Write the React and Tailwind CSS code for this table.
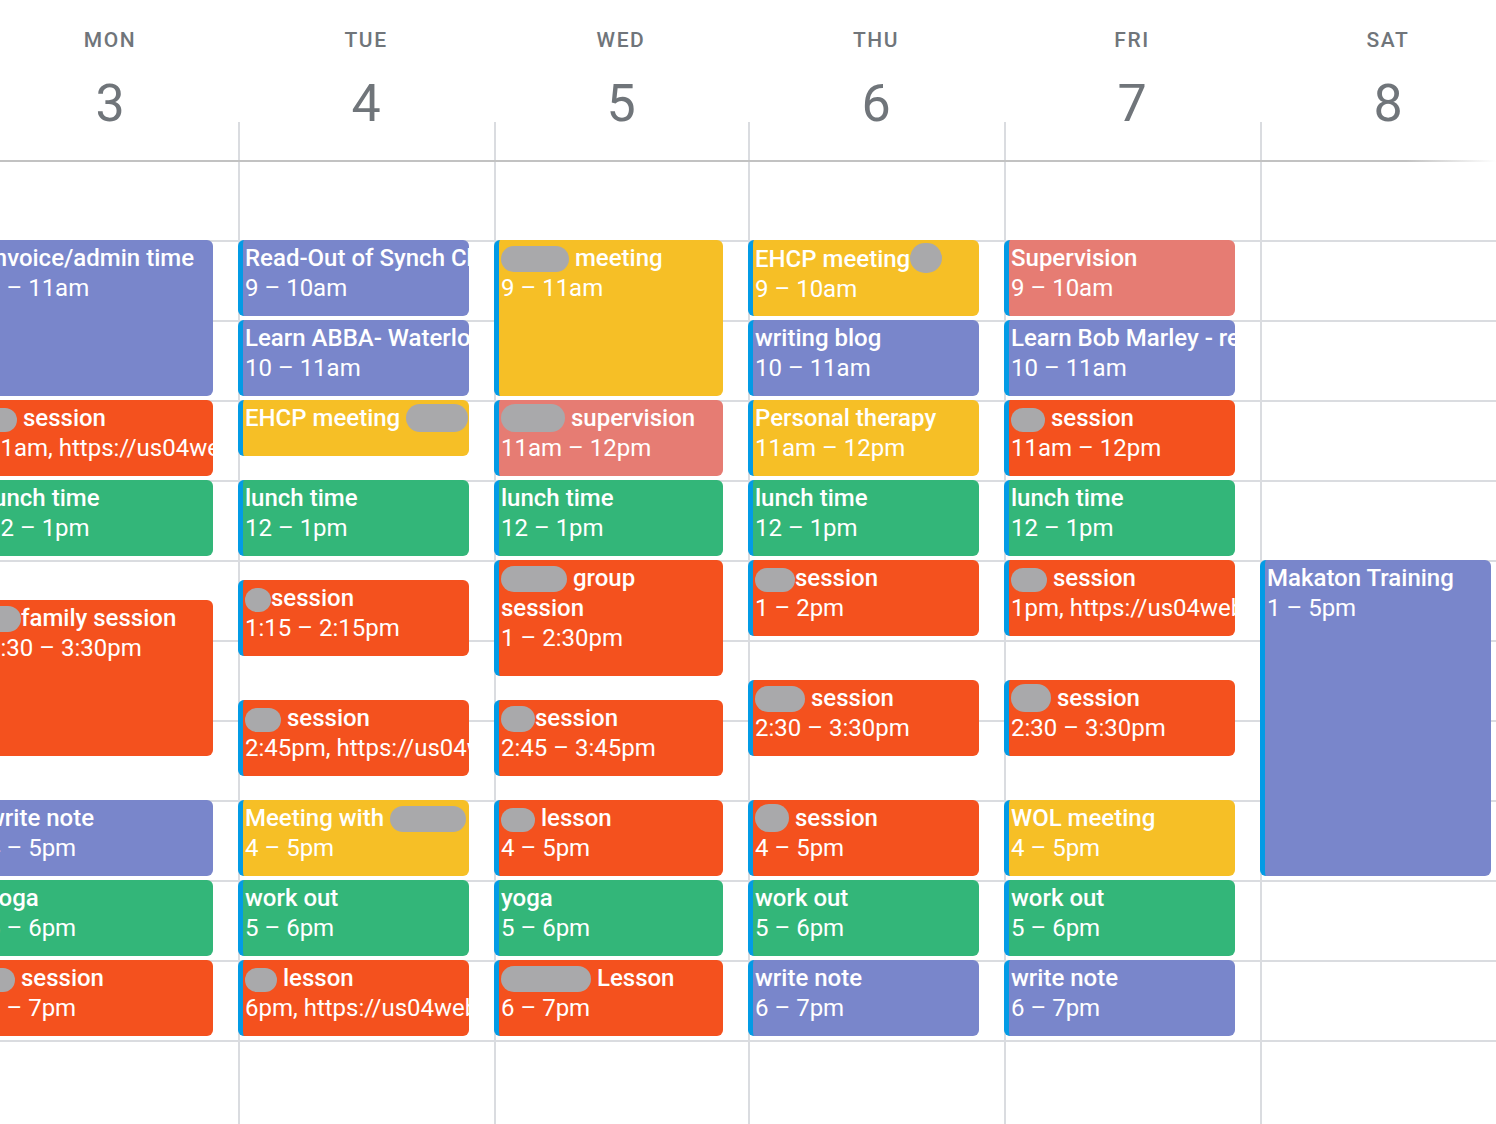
import React from 'react';

const LAV = 'bg-[#7986cb]';
const YEL = 'bg-[#f6bf26]';
const ORG = 'bg-[#f4511e]';
const FLA = 'bg-[#e67c73]';
const GRN = 'bg-[#33b679]';

// redacted name smudge
const Blob = ({ className }) => (
  <span className={`inline-block align-[-6px] rounded-full bg-[#a9a9ab] ${className}`} />
);

const days = [
  {
    name: 'MON',
    num: 3,
    w: 'w-[256px]',
    events: [
      { s: 9, e: 11, c: LAV, title: 'Invoice/admin time', time: '9 – 11am' },
      { s: 11, e: 12, c: ORG, title: <><Blob className="w-[30px] h-[24px]" /> session</>, time: '11am, https://us04web.zoom.us/j/' },
      { s: 12, e: 13, c: GRN, title: 'lunch time', time: '12 – 1pm' },
      { s: 13.5, e: 15.5, c: ORG, title: <><Blob className="w-[34px] h-[26px]" />family session</>, time: '1:30 – 3:30pm' },
      { s: 16, e: 17, c: LAV, title: 'write note', time: '4 – 5pm' },
      { s: 17, e: 18, c: GRN, title: 'yoga', time: '5 – 6pm' },
      { s: 18, e: 19, c: ORG, title: <><Blob className="w-[28px] h-[24px]" /> session</>, time: '6 – 7pm' },
    ],
  },
  {
    name: 'TUE',
    num: 4,
    w: 'w-[256px]',
    events: [
      { s: 9, e: 10, c: LAV, title: 'Read-Out of Synch Choir', time: '9 – 10am' },
      { s: 10, e: 11, c: LAV, title: 'Learn ABBA- Waterloo', time: '10 – 11am' },
      { s: 11, e: 11.75, c: YEL, title: <>EHCP meeting <Blob className="w-[62px] h-[28px]" /></>, time: '' },
      { s: 12, e: 13, c: GRN, title: 'lunch time', time: '12 – 1pm' },
      { s: 13.25, e: 14.25, c: ORG, title: <><Blob className="w-[26px] h-[24px]" />session</>, time: '1:15 – 2:15pm' },
      { s: 14.75, e: 15.75, c: ORG, title: <><Blob className="w-[36px] h-[24px]" /> session</>, time: '2:45pm, https://us04web.zoom.us' },
      { s: 16, e: 17, c: YEL, title: <>Meeting with <Blob className="w-[76px] h-[26px]" /></>, time: '4 – 5pm' },
      { s: 17, e: 18, c: GRN, title: 'work out', time: '5 – 6pm' },
      { s: 18, e: 19, c: ORG, title: <><Blob className="w-[32px] h-[24px]" /> lesson</>, time: '6pm, https://us04web.zoom.us' },
    ],
  },
  {
    name: 'WED',
    num: 5,
    w: 'w-[254px]',
    events: [
      { s: 9, e: 11, c: YEL, title: <><Blob className="w-[68px] h-[26px]" /> meeting</>, time: '9 – 11am' },
      { s: 11, e: 12, c: FLA, title: <><Blob className="w-[64px] h-[28px]" /> supervision</>, time: '11am – 12pm' },
      { s: 12, e: 13, c: GRN, title: 'lunch time', time: '12 – 1pm' },
      { s: 13, e: 14.5, c: ORG, title: <><Blob className="w-[66px] h-[26px]" /> group<br />session</>, time: '1 – 2:30pm' },
      { s: 14.75, e: 15.75, c: ORG, title: <><Blob className="w-[34px] h-[26px]" />session</>, time: '2:45 – 3:45pm' },
      { s: 16, e: 17, c: ORG, title: <><Blob className="w-[34px] h-[24px]" /> lesson</>, time: '4 – 5pm' },
      { s: 17, e: 18, c: GRN, title: 'yoga', time: '5 – 6pm' },
      { s: 18, e: 19, c: ORG, title: <><Blob className="w-[90px] h-[26px]" /> Lesson</>, time: '6 – 7pm' },
    ],
  },
  {
    name: 'THU',
    num: 6,
    w: 'w-[256px]',
    events: [
      { s: 9, e: 10, c: YEL, title: <>EHCP meeting<Blob className="w-[32px] h-[30px]" /></>, time: '9 – 10am' },
      { s: 10, e: 11, c: LAV, title: 'writing blog', time: '10 – 11am' },
      { s: 11, e: 12, c: YEL, title: 'Personal therapy', time: '11am – 12pm' },
      { s: 12, e: 13, c: GRN, title: 'lunch time', time: '12 – 1pm' },
      { s: 13, e: 14, c: ORG, title: <><Blob className="w-[40px] h-[24px]" />session</>, time: '1 – 2pm' },
      { s: 14.5, e: 15.5, c: ORG, title: <><Blob className="w-[50px] h-[26px]" /> session</>, time: '2:30 – 3:30pm' },
      { s: 16, e: 17, c: ORG, title: <><Blob className="w-[34px] h-[28px]" /> session</>, time: '4 – 5pm' },
      { s: 17, e: 18, c: GRN, title: 'work out', time: '5 – 6pm' },
      { s: 18, e: 19, c: LAV, title: 'write note', time: '6 – 7pm' },
    ],
  },
  {
    name: 'FRI',
    num: 7,
    w: 'w-[256px]',
    events: [
      { s: 9, e: 10, c: FLA, title: 'Supervision', time: '9 – 10am' },
      { s: 10, e: 11, c: LAV, title: 'Learn Bob Marley - redemption song', time: '10 – 11am' },
      { s: 11, e: 12, c: ORG, title: <><Blob className="w-[34px] h-[24px]" /> session</>, time: '11am – 12pm' },
      { s: 12, e: 13, c: GRN, title: 'lunch time', time: '12 – 1pm' },
      { s: 13, e: 14, c: ORG, title: <><Blob className="w-[36px] h-[24px]" /> session</>, time: '1pm, https://us04web.zoom.us' },
      { s: 14.5, e: 15.5, c: ORG, title: <><Blob className="w-[40px] h-[28px]" /> session</>, time: '2:30 – 3:30pm' },
      { s: 16, e: 17, c: YEL, title: 'WOL meeting', time: '4 – 5pm' },
      { s: 17, e: 18, c: GRN, title: 'work out', time: '5 – 6pm' },
      { s: 18, e: 19, c: LAV, title: 'write note', time: '6 – 7pm' },
    ],
  },
  {
    name: 'SAT',
    num: 8,
    w: 'w-[256px]',
    events: [
      { s: 13, e: 17, c: LAV, title: 'Makaton Training', time: '1 – 5pm' },
    ],
  },
];

const hours = [9, 10, 11, 12, 13, 14, 15, 16, 17, 18, 19];

const Event = ({ ev }) => (
  <div
    className={`absolute -left-[2px] right-[25px] ${ev.c} rounded-[6px] border-l-[5px] border-[#039be5] pl-[2px] pt-[3px] overflow-hidden text-white text-[24px] leading-[30px]`}
    style={{ top: (ev.s - 8) * 80 - 2, height: (ev.e - ev.s) * 80 - 4 }}
  >
    <div className="font-medium whitespace-nowrap">{ev.title}</div>
    {ev.time && <div className="whitespace-nowrap">{ev.time}</div>}
  </div>
);

const App = () => {
  return (
    <div className="relative w-[1496px] h-[1124px] overflow-hidden bg-white font-['Roboto',sans-serif] text-[#70757a]">
      {/* Header */}
      <div className="flex -ml-[18px]">
        {days.map((d, i) => (
          <div key={d.name} className={`${d.w} shrink-0 flex flex-col`}>
            <div className="h-[64px] pt-[28px] text-center text-[21px] leading-[24px] font-medium tracking-[1.6px]">
              {d.name}
            </div>
            <div className="h-[58px] pt-[14px] text-center text-[52px] leading-[52px]">{d.num}</div>
            <div className={`h-[38px] ${i > 0 ? 'border-l-2 border-[#dadce0]' : ''}`} />
          </div>
        ))}
      </div>
      <div className="h-[2px] bg-linear-to-r from-[#c2c2c2] via-[#c2c2c2] via-94% to-white" />

      {/* Grid */}
      <div className="flex -ml-[18px]">
        {days.map((d, i) => (
          <div
            key={d.name}
            className={`${d.w} shrink-0 relative h-[962px] ${i > 0 ? 'border-l-2 border-[#dadce0]' : ''}`}
          >
            <div className="h-[78px]" />
            {hours.map((h) => (
              <div key={h} className="h-[80px] border-t-2 border-[#dadce0]" />
            ))}
            {d.events.map((ev, k) => (
              <Event key={k} ev={ev} />
            ))}
          </div>
        ))}
      </div>
    </div>
  );
};

export default App;
